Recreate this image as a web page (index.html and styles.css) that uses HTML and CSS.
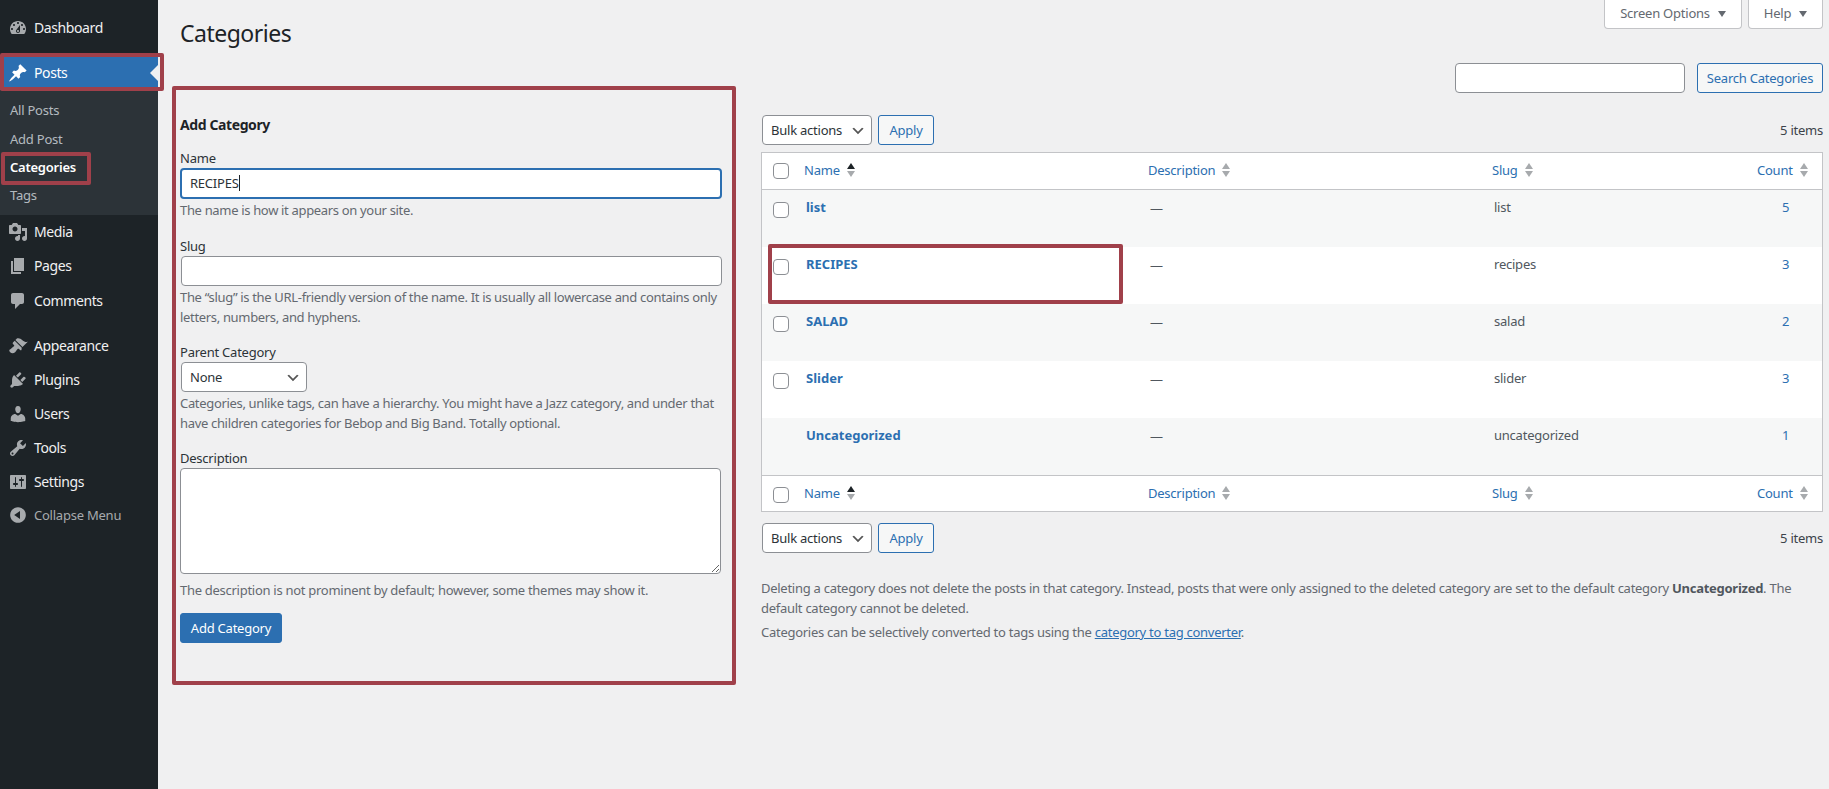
FILE: index.html
```html
<!DOCTYPE html>
<html lang="en">
<head>
  <meta charset="UTF-8">
  <title>Categories</title>
  <link rel="stylesheet" href="styles.css">
</head>
<body>
  <aside class="sidebar">
    <a class="menu-item"><svg class="menu-icon" viewBox="0 0 20 20"><path d="M3.76 16h12.48c1.1-1.37 1.76-3.11 1.76-5 0-4.42-3.58-8-8-8s-8 3.58-8 8c0 1.89.66 3.63 1.76 5zM10 4c.55 0 1 .45 1 1s-.45 1-1 1-1-.45-1-1 .45-1 1-1zM6 6c.55 0 1 .45 1 1s-.45 1-1 1-1-.45-1-1 .45-1 1-1zm8 0c.55 0 1 .45 1 1s-.45 1-1 1-1-.45-1-1 .45-1 1-1zm-5.37 5.55L12 7v6c0 1.1-.9 2-2 2s-2-.9-2-2c0-.57.24-1.08.63-1.45zM4 10c.55 0 1 .45 1 1s-.45 1-1 1-1-.45-1-1 .45-1 1-1zm12 0c.55 0 1 .45 1 1s-.45 1-1 1-1-.45-1-1 .45-1 1-1zm-5 3c0-.55-.45-1-1-1s-1 .45-1 1 .45 1 1 1 1-.45 1-1z"/></svg>Dashboard</a>
    <div class="menu-sep"></div>
    <a class="menu-item current"><svg class="menu-icon" viewBox="0 0 20 20"><path d="M10.44 3.02l1.82-1.82 6.36 6.35-1.83 1.82c-1.05-.68-2.48-.57-3.41.36l-.75.75c-.92.93-1.04 2.35-.35 3.41l-1.83 1.82-2.41-2.41-2.8 2.79c-.42.42-3.38 2.71-3.8 2.29s1.86-3.39 2.28-3.81l2.79-2.79L4.1 9.36l1.83-1.82c1.05.69 2.48.57 3.4-.36l.75-.75c.93-.92 1.05-2.35.36-3.41z"/></svg>Posts</a>
    <ul class="submenu">
      <li>All Posts</li>
      <li>Add Post</li>
      <li class="current">Categories</li>
      <li>Tags</li>
    </ul>
    <a class="menu-item"><svg class="menu-icon" viewBox="0 0 20 20"><path d="M13 11V4c0-.55-.45-1-1-1h-1.67L9 1H5L3.67 3H2c-.55 0-1 .45-1 1v7c0 .55.45 1 1 1h10c.55 0 1-.45 1-1zM7 4.5c1.38 0 2.5 1.12 2.5 2.5S8.38 9.5 7 9.5 4.5 8.38 4.5 7 5.62 4.5 7 4.5zM14 6h5v10.5c0 1.38-1.12 2.5-2.5 2.5S14 17.88 14 16.5s1.12-2.5 2.5-2.5c.17 0 .34.02.5.05V9h-3V6zm-4 8.05V13h2v3.5c0 1.38-1.12 2.5-2.5 2.5S7 17.88 7 16.5 8.12 14 9.5 14c.17 0 .34.02.5.05z"/></svg>Media</a>
    <a class="menu-item"><svg class="menu-icon" viewBox="0 0 20 20"><path d="M6 15V2h10v13H6zm-1 1h8v2H3V5h2v11z"/></svg>Pages</a>
    <a class="menu-item menu-comments"><svg class="menu-icon" viewBox="0 0 20 20"><path d="M5 2h9c1.1 0 2 .9 2 2v7c0 1.1-.9 2-2 2h-2l-5 5v-5H5c-1.1 0-2-.9-2-2V4c0-1.1.9-2 2-2z"/></svg>Comments</a>
    <div class="menu-sep"></div>
    <a class="menu-item"><svg class="menu-icon" viewBox="0 0 20 20"><path d="M14.48 11.06L7.41 3.99l1.5-1.5c.5-.56 2.3-.47 3.51.32 1.21.8 1.43 1.28 2.91 2.1 1.18.64 2.45 1.26 4.45.85zm-.71.71L6.7 4.7 4.93 6.47c-.39.39-.39 1.02 0 1.41l1.06 1.06c.39.39.39 1.03 0 1.42-.6.6-1.43 1.11-2.21 1.69-.35.26-.7.53-1.01.84C1.43 13.23.4 14.4 2.48 16.48c.8.8 3.25 1.05 4.59-.29.31-.31.58-.66.84-1.01.58-.78 1.09-1.61 1.69-2.21.39-.39 1.02-.39 1.41 0l1.06 1.06c.39.39 1.02.39 1.41 0z"/></svg>Appearance</a>
    <a class="menu-item"><svg class="menu-icon" viewBox="0 0 20 20"><path d="M13.11 4.36L9.87 7.6 8 5.73l3.24-3.24c.35-.34 1.05-.2 1.56.32.52.51.66 1.21.31 1.55zm-8 1.77l.91-1.12 9.01 9.01-1.19.84c-.71.71-2.63 1.16-3.82 1.16H6.14L4.9 17.26c-.59.59-1.54.59-2.12 0-.59-.58-.59-1.53 0-2.12l1.24-1.24v-3.88c0-1.13.4-3.19 1.09-3.89zm7.26 3.97l3.24-3.24c.34-.35 1.04-.21 1.55.31.52.51.66 1.21.31 1.55l-3.24 3.25z"/></svg>Plugins</a>
    <a class="menu-item"><svg class="menu-icon" viewBox="0 0 20 20"><path d="M10 9.25c-2.27 0-2.73-3.44-2.73-3.44C7 4.02 7.82 2 9.97 2c2.16 0 2.98 2.02 2.71 3.81 0 0-.41 3.44-2.68 3.44zm0 2.57L12.72 10c2.39 0 4.52 2.33 4.52 4.53v2.49s-3.65 1.13-7.24 1.13c-3.65 0-7.24-1.13-7.24-1.13v-2.49c0-2.25 1.94-4.48 4.47-4.48z"/></svg>Users</a>
    <a class="menu-item"><svg class="menu-icon" viewBox="0 0 20 20"><path d="M16.68 9.77c-1.34 1.34-3.3 1.67-4.95.99l-5.41 6.52c-.99.99-2.59.99-3.58 0s-.99-2.59 0-3.57l6.52-5.42c-.68-1.65-.35-3.61.99-4.95 1.28-1.28 3.12-1.62 4.72-1.06l-2.89 2.89 2.82 2.82 2.86-2.87c.53 1.58.18 3.39-1.08 4.65zM3.81 16.21c.4.39 1.04.39 1.43 0 .4-.4.4-1.04 0-1.43-.39-.4-1.03-.4-1.43 0-.39.39-.39 1.03 0 1.43z"/></svg>Tools</a>
    <a class="menu-item"><svg class="menu-icon" viewBox="0 0 20 20"><path d="M18 16V4c0-.55-.45-1-1-1H3c-.55 0-1 .45-1 1v12c0 .55.45 1 1 1h14c.55 0 1-.45 1-1zM8 11h1c.55 0 1 .45 1 1s-.45 1-1 1H8v1.5c0 .28-.22.5-.5.5s-.5-.22-.5-.5V13H6c-.55 0-1-.45-1-1s.45-1 1-1h1V5.5c0-.28.22-.5.5-.5s.5.22.5.5V11zm5-2h-1c-.55 0-1-.45-1-1s.45-1 1-1h1V5.5c0-.28.22-.5.5-.5s.5.22.5.5V7h1c.55 0 1 .45 1 1s-.45 1-1 1h-1v5.5c0 .28-.22.5-.5.5s-.5-.22-.5-.5V9z"/></svg>Settings</a>
    <a class="menu-item collapse"><svg class="menu-icon" viewBox="0 0 20 20"><path d="M10 2.16c4.33 0 7.84 3.51 7.84 7.84s-3.51 7.84-7.84 7.84S2.16 14.33 2.16 10 5.71 2.16 10 2.16zm2 11.72V6.12L6.18 9.97z"/></svg>Collapse Menu</a>
  </aside>

  <main class="content">
    <div class="page-top">
      <h1>Categories</h1>
      <div class="screen-tabs">
        <button class="screen-tab tab-options">Screen Options<span class="tab-arrow"></span></button>
        <button class="screen-tab tab-help">Help<span class="tab-arrow"></span></button>
      </div>
    </div>

    <div class="search-row">
      <input type="text" class="search-input">
      <button class="btn btn-secondary btn-search">Search Categories</button>
    </div>

    <div class="columns">
      <section class="col-left">
        <h2>Add Category</h2>
        <div class="field field-name">
          <label>Name</label>
          <div class="input-focus">RECIPES<span class="caret"></span></div>
          <p class="hint">The name is how it appears on your site.</p>
        </div>
        <div class="field">
          <label>Slug</label>
          <input type="text" class="text-input">
          <p class="hint">The “slug” is the URL-friendly version of the name. It is usually all lowercase and contains only<br>letters, numbers, and hyphens.</p>
        </div>
        <div class="field">
          <label>Parent Category</label>
          <select class="select select-parent"><option>None</option></select>
          <p class="hint">Categories, unlike tags, can have a hierarchy. You might have a Jazz category, and under that<br>have children categories for Bebop and Big Band. Totally optional.</p>
        </div>
        <div class="field">
          <label>Description</label>
          <textarea class="desc-input"></textarea>
          <p class="hint hint-desc">The description is not prominent by default; however, some themes may show it.</p>
        </div>
        <button class="btn btn-primary">Add Category</button>
      </section>

      <section class="col-right">
        <div class="tablenav">
          <select class="select select-bulk"><option>Bulk actions</option></select>
          <button class="btn btn-secondary btn-apply">Apply</button>
          <span class="item-count">5 items</span>
        </div>

        <table class="list-table">
          <colgroup>
            <col class="col-cb"><col class="col-name"><col class="col-desc"><col class="col-slug"><col class="col-count">
          </colgroup>
          <thead>
            <tr>
              <th><input type="checkbox" class="cb"></th>
              <th><a class="sort">Name<span class="sort-icon asc"></span></a></th>
              <th><a class="sort">Description<span class="sort-icon"></span></a></th>
              <th><a class="sort">Slug<span class="sort-icon"></span></a></th>
              <th><a class="sort">Count<span class="sort-icon"></span></a></th>
            </tr>
          </thead>
          <tbody>
            <tr>
              <td class="cb-cell"><input type="checkbox" class="cb"></td>
              <td class="name-cell"><a>list</a></td>
              <td class="dash-cell">—</td><td>list</td><td class="count-cell"><a>5</a></td>
            </tr>
            <tr>
              <td class="cb-cell"><input type="checkbox" class="cb"></td>
              <td class="name-cell"><a>RECIPES</a></td>
              <td class="dash-cell">—</td><td>recipes</td><td class="count-cell"><a>3</a></td>
            </tr>
            <tr>
              <td class="cb-cell"><input type="checkbox" class="cb"></td>
              <td class="name-cell"><a>SALAD</a></td>
              <td class="dash-cell">—</td><td>salad</td><td class="count-cell"><a>2</a></td>
            </tr>
            <tr>
              <td class="cb-cell"><input type="checkbox" class="cb"></td>
              <td class="name-cell"><a>Slider</a></td>
              <td class="dash-cell">—</td><td>slider</td><td class="count-cell"><a>3</a></td>
            </tr>
            <tr>
              <td class="cb-cell"></td>
              <td class="name-cell"><a>Uncategorized</a></td>
              <td class="dash-cell">—</td><td>uncategorized</td><td class="count-cell"><a>1</a></td>
            </tr>
          </tbody>
          <tfoot>
            <tr>
              <th><input type="checkbox" class="cb"></th>
              <th><a class="sort">Name<span class="sort-icon asc"></span></a></th>
              <th><a class="sort">Description<span class="sort-icon"></span></a></th>
              <th><a class="sort">Slug<span class="sort-icon"></span></a></th>
              <th><a class="sort">Count<span class="sort-icon"></span></a></th>
            </tr>
          </tfoot>
        </table>

        <div class="tablenav tablenav-bottom">
          <select class="select select-bulk"><option>Bulk actions</option></select>
          <button class="btn btn-secondary btn-apply">Apply</button>
          <span class="item-count">5 items</span>
        </div>

        <div class="notes">
          <p>Deleting a category does not delete the posts in that category. Instead, posts that were only assigned to the deleted category are set to the default category <strong>Uncategorized</strong>. The<br>default category cannot be deleted.</p>
          <p>Categories can be selectively converted to tags using the <a href="#">category to tag converter</a>.</p>
        </div>
      </section>
    </div>
  </main>

  <!-- red annotation boxes drawn over the screenshot -->
  <div class="mark mark-posts"></div>
  <div class="mark mark-cats"></div>
  <div class="mark mark-form"></div>
  <div class="mark mark-row"></div>
</body>
</html>
```

FILE: styles.css
```css
* {
  box-sizing: border-box;
}
body {
  margin: 0;
  height: 789px;
  overflow: hidden;
  display: flex;
  background: #f0f0f1;
  color: #3c434a;
  font-family: "Noto Sans", sans-serif;
  font-size: 13px;
  line-height: 20px;
  letter-spacing: -0.23px;
}
button, input, select, textarea {
  font-family: inherit;
  font-size: 13px;
  letter-spacing: inherit;
}

/* Sidebar */
.sidebar {
  width: 158px;
  flex: none;
  padding-top: 11px;
  background: #1d2327;
}
.menu-item {
  position: relative;
  display: flex;
  align-items: center;
  height: 34px;
  color: #f0f0f1;
  font-size: 14px;
  letter-spacing: -0.4px;
}
.menu-icon {
  width: 20px;
  height: 20px;
  margin: 0 6px 0 8px;
  fill: #a7aaad;
}
.menu-sep {
  height: 11px;
}
.menu-comments {
  margin-top: 1px;
}
.menu-item.current {
  background: #2c6fb1;
  color: #fff;
}
.menu-item.current .menu-icon {
  fill: #fff;
}
.menu-item.current::after {
  content: "";
  position: absolute;
  right: 0;
  top: 9px;
  border: 8px solid transparent;
  border-right-color: #f0f0f1;
  border-left: 0;
}
.menu-item.collapse {
  margin-top: -1px;
  color: #a7aaad;
  font-size: 13px;
  letter-spacing: -0.23px;
}
.submenu {
  list-style: none;
  margin: 0;
  padding: 7px 0;
  height: 125px;
  background: #2c3338;
}
.submenu li {
  height: 28px;
  padding: 4px 0 0 10px;
  color: rgba(240, 246, 252, 0.7);
}
.submenu li:first-child {
  padding-top: 3px;
}
.submenu li.current {
  color: #fff;
  font-weight: 600;
}

/* Page head */
.content {
  flex: 1;
  padding: 0 6px 0 22px;
}
.page-top {
  display: flex;
  justify-content: space-between;
  align-items: flex-start;
  height: 63px;
}
h1 {
  margin: 18px 0 0;
  font-size: 23px;
  font-weight: 400;
  line-height: 30px;
  letter-spacing: -0.5px;
  color: #1d2327;
}
.screen-tabs {
  display: flex;
  gap: 6px;
}
.screen-tab {
  height: 29px;
  padding: 0 0 2px;
  border: 1px solid #c3c4c7;
  border-top: 0;
  border-radius: 0 0 4px 4px;
  background: #fff;
  color: #646970;
}
.tab-options {
  width: 138px;
}
.tab-help {
  width: 75px;
}
.tab-arrow {
  display: inline-block;
  margin-left: 8px;
  vertical-align: 1px;
  border: 4px solid transparent;
  border-top: 6px solid #646970;
  border-bottom: 0;
}
.search-row {
  display: flex;
  justify-content: flex-end;
  gap: 12px;
  height: 30px;
}
.search-input {
  width: 230px;
  height: 30px;
  border: 1px solid #8c8f94;
  border-radius: 4px;
  background: #fff;
}

/* Buttons */
.btn {
  height: 30px;
  padding: 0;
  border-radius: 3px;
  cursor: pointer;
}
.btn-primary {
  width: 102px;
  border: 1px solid #2c6fb1;
  background: #2c6fb1;
  color: #fff;
}
.btn-secondary {
  border: 1px solid #2c6fb1;
  background: #f6f7f7;
  color: #2c6fb1;
}
.btn-search {
  width: 126px;
}
.btn-apply {
  width: 56px;
}

/* Add form */
.columns {
  display: flex;
  gap: 39px;
}
.col-left {
  width: 542px;
  flex: none;
  padding-top: 22px;
}
h2 {
  margin: 0 0 14px;
  font-size: 14px;
  font-weight: 700;
  line-height: 20px;
  letter-spacing: -0.4px;
  color: #1d2327;
}
.field {
  margin-bottom: 16px;
}
.field-name {
  margin-bottom: 17px;
}
.field label {
  display: block;
  height: 18px;
  margin-bottom: 1px;
  line-height: 18px;
  color: #2c3338;
}
.input-focus {
  height: 31px;
  padding-left: 8px;
  border: 2px solid #2c6fb1;
  border-radius: 4px;
  background: #fff;
  color: #2c3338;
  line-height: 27px;
}
.caret {
  display: inline-block;
  width: 1px;
  height: 16px;
  vertical-align: -3px;
  background: #1d2327;
}
.text-input {
  display: block;
  width: 541px;
  height: 30px;
  margin-left: 1px;
  border: 1px solid #8c8f94;
  border-radius: 4px;
  background: #fff;
}
.desc-input {
  display: block;
  width: 541px;
  height: 106px;
  border: 1px solid #8c8f94;
  border-radius: 4px;
  background: #fff;
}
.hint {
  margin: 1px 0 0;
  color: #646970;
  letter-spacing: -0.33px;
  white-space: nowrap;
}
.hint-desc {
  margin-top: 6px;
  margin-bottom: 13px;
  letter-spacing: -0.28px;
}
.field:last-of-type {
  margin-bottom: 0;
}
.select {
  display: block;
  height: 30px;
  padding: 0 24px 0 8px;
  border: 1px solid #8c8f94;
  border-radius: 4px;
  color: #2c3338;
  appearance: none;
  background: #fff url('data:image/svg+xml;charset=US-ASCII,%3Csvg%20xmlns%3D%22http%3A%2F%2Fwww.w3.org%2F2000%2Fsvg%22%20width%3D%2220%22%20height%3D%2220%22%3E%3Cpath%20d%3D%22M5%206l5%205%205-5%202%201-7%207-7-7%202-1z%22%20fill%3D%22%23555%22%2F%3E%3C%2Fsvg%3E') no-repeat right 5px top 55%;
  background-size: 16px 16px;
}
.select-parent {
  width: 126px;
  margin-left: 1px;
}
.select-bulk {
  width: 110px;
  margin-left: 1px;
}

/* Table side */
.col-right {
  width: 1062px;
  flex: none;
  padding-top: 22px;
}
.tablenav {
  display: flex;
  align-items: center;
  gap: 6px;
  height: 30px;
  margin-bottom: 7px;
}
.item-count {
  margin-left: auto;
}
.tablenav-bottom {
  margin: 11px 0 25px;
}
.list-table {
  width: 1062px;
  table-layout: fixed;
  border: 1px solid #c3c4c7;
  border-spacing: 0;
  background: #fff;
}
.col-cb { width: 34px; }
.col-name { width: 344px; }
.col-desc { width: 344px; }
.col-slug { width: 265px; }
.col-count { width: 73px; }
.list-table th {
  height: 36px;
  padding: 0 0 0 8px;
  font-weight: 400;
  text-align: left;
  vertical-align: top;
}
.list-table thead th {
  height: 37px;
  padding-top: 7px;
  border-bottom: 1px solid #c3c4c7;
}
.list-table tfoot th {
  height: 36px;
  padding-top: 7px;
  border-top: 1px solid #c3c4c7;
}
.list-table th:first-child {
  padding: 10px 0 0 11px;
}
.list-table tfoot th:first-child {
  padding-top: 11px;
}
.cb {
  display: block;
  width: 16px;
  height: 16px;
  margin: 0;
  border: 1px solid #8c8f94;
  border-radius: 4px;
  background: #fff;
  appearance: none;
}
.list-table td {
  height: 57px;
  padding: 7px 10px 0;
  vertical-align: top;
  color: #50575e;
}
.list-table tbody tr:nth-child(odd) {
  background: #f6f7f7;
}
.list-table td.cb-cell {
  padding: 12px 0 0 11px;
}
.list-table td.dash-cell {
  padding-top: 8px;
}
.list-table td.name-cell {
  font-weight: 700;
  letter-spacing: 0;
}
.list-table td.count-cell {
  text-align: center;
}
.list-table a {
  color: #2c6fb1;
}
.sort {
  display: inline-flex;
  align-items: center;
}
.sort-icon {
  display: inline-block;
  position: relative;
  width: 8px;
  height: 14px;
  margin-left: 7px;
}
.sort-icon::before, .sort-icon::after {
  content: "";
  position: absolute;
  left: 0;
  border: 4px solid transparent;
}
.sort-icon::before {
  top: 0;
  border-top: 0;
  border-bottom: 6px solid #a7aaad;
}
.sort-icon::after {
  bottom: 0;
  border-bottom: 0;
  border-top: 6px solid #a7aaad;
}
.sort-icon.asc::before {
  border-bottom-color: #1d2327;
}

/* Notes under the table */
.notes p {
  margin: 0 0 4px;
  color: #646970;
  letter-spacing: -0.27px;
}
.notes strong {
  color: #50575e;
}
.notes a {
  color: #2c6fb1;
  text-decoration: underline;
}

/* Red annotations */
.mark {
  position: absolute;
  border: 4px solid #a0404a;
  border-radius: 2px;
  pointer-events: none;
}
.mark-posts {
  left: 0;
  top: 53px;
  width: 164px;
  height: 38px;
}
.mark-cats {
  left: 1px;
  top: 152px;
  width: 90px;
  height: 33px;
}
.mark-form {
  left: 172px;
  top: 86px;
  width: 564px;
  height: 599px;
}
.mark-row {
  left: 768px;
  top: 244px;
  width: 355px;
  height: 60px;
}
```
